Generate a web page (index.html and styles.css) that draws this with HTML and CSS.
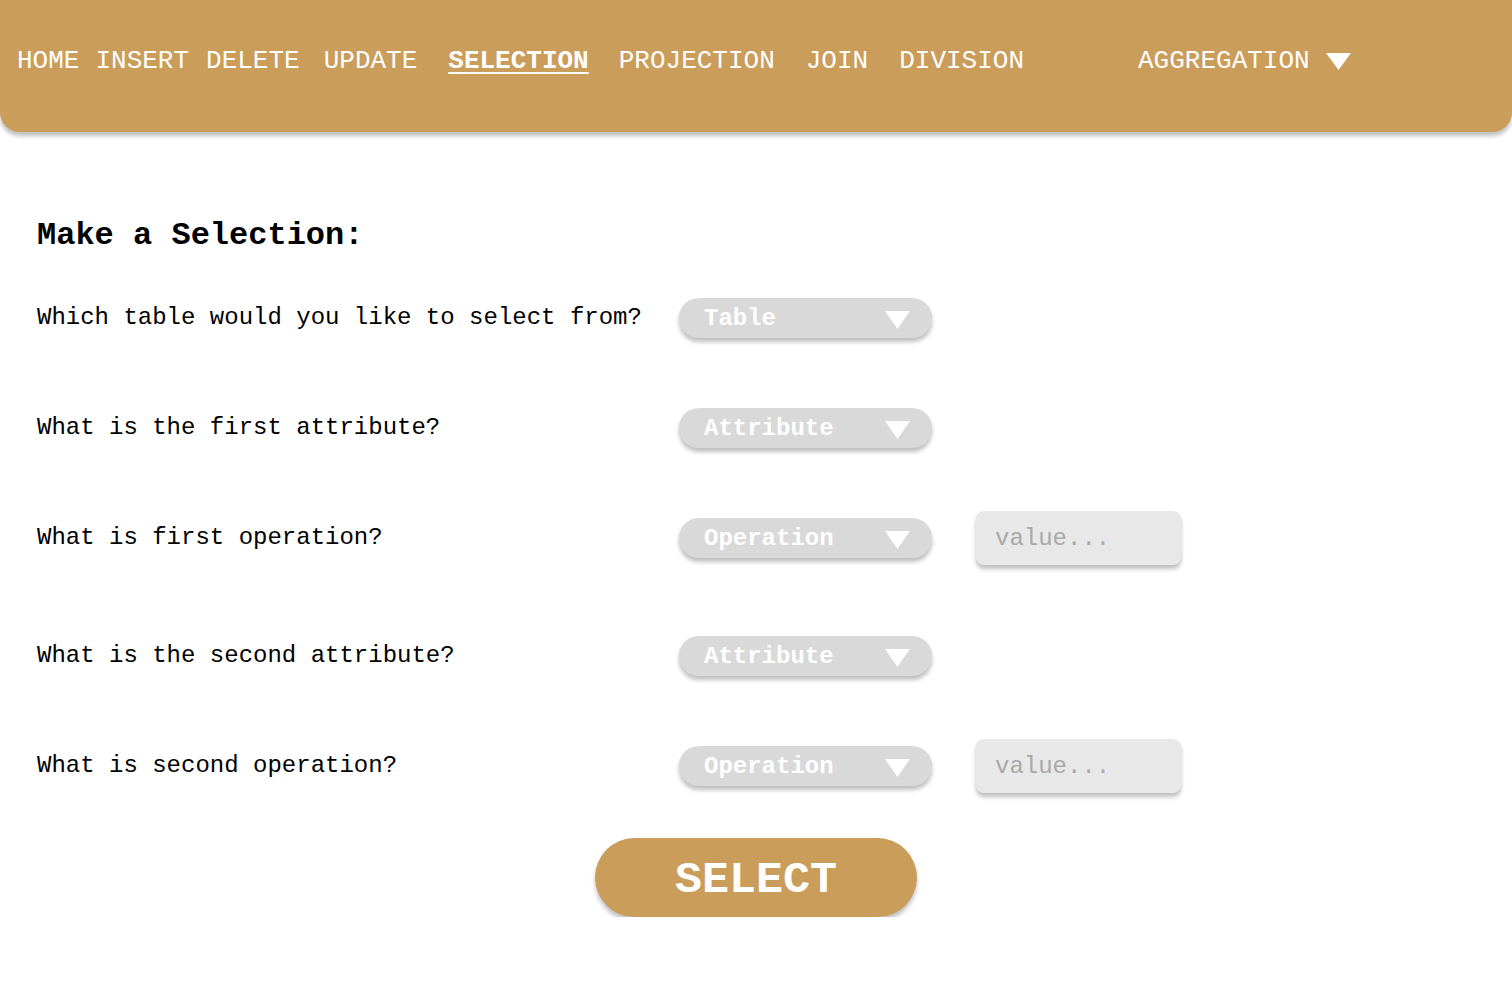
FILE: index.html
```html
<!DOCTYPE html>
<html lang="en">
<head>
<meta charset="utf-8">
<title>Selection</title>
<link rel="stylesheet" href="styles.css">
</head>
<body>
<nav class="topnav">
  <a class="nav-link nl-home" href="#">HOME</a>
  <a class="nav-link nl-insert" href="#">INSERT</a>
  <a class="nav-link nl-delete" href="#">DELETE</a>
  <a class="nav-link nl-update" href="#">UPDATE</a>
  <a class="nav-link nl-std active" href="#">SELECTION</a>
  <a class="nav-link nl-proj" href="#">PROJECTION</a>
  <a class="nav-link nl-std" href="#">JOIN</a>
  <a class="nav-link nl-std" href="#">DIVISION</a>
  <a class="nav-link nl-agg" href="#">AGGREGATION
    <svg class="nav-caret" width="25" height="17" viewBox="0 0 25 17"><polygon points="0,0 25,0 12.5,17" fill="#fff"/></svg>
  </a>
</nav>
<main class="content">
  <h1 class="title">Make a Selection:</h1>
  <div class="row">
    <span class="label">Which table would you like to select from?</span>
    <div class="dropdown"><span>Table</span><svg class="caret" width="25" height="18" viewBox="0 0 25 18"><polygon points="0,0 25,0 12.5,18" fill="#fff"/></svg></div>
  </div>
  <div class="row">
    <span class="label">What is the first attribute?</span>
    <div class="dropdown"><span>Attribute</span><svg class="caret" width="25" height="18" viewBox="0 0 25 18"><polygon points="0,0 25,0 12.5,18" fill="#fff"/></svg></div>
  </div>
  <div class="row">
    <span class="label">What is first operation?</span>
    <div class="dropdown"><span>Operation</span><svg class="caret" width="25" height="18" viewBox="0 0 25 18"><polygon points="0,0 25,0 12.5,18" fill="#fff"/></svg></div>
    <input class="value" type="text" placeholder="value...">
  </div>
  <div class="row row-wide">
    <span class="label">What is the second attribute?</span>
    <div class="dropdown"><span>Attribute</span><svg class="caret" width="25" height="18" viewBox="0 0 25 18"><polygon points="0,0 25,0 12.5,18" fill="#fff"/></svg></div>
  </div>
  <div class="row">
    <span class="label">What is second operation?</span>
    <div class="dropdown"><span>Operation</span><svg class="caret" width="25" height="18" viewBox="0 0 25 18"><polygon points="0,0 25,0 12.5,18" fill="#fff"/></svg></div>
    <input class="value" type="text" placeholder="value...">
  </div>
  <div class="actions">
    <button class="select-btn" type="button">SELECT</button>
  </div>
</main>
</body>
</html>
```

FILE: styles.css
```css
* { box-sizing: border-box; }
html, body { margin: 0; padding: 0; background: #fff; }
body {
  font-family: "Liberation Mono", "Courier New", monospace;
  color: #000;
}
.topnav {
  height: 132px;
  background: #CB9D5A;
  border-radius: 0 0 20px 20px;
  box-shadow: 0 4px 4px rgba(0, 0, 0, 0.25);
  display: flex;
  align-items: flex-start;
  padding: 46px 0 0 17px;
}
.nav-link {
  color: #fff;
  text-decoration: none;
  font-size: 26px;
  line-height: 30px;
  white-space: nowrap;
  display: flex;
  align-items: center;
}
.nl-insert { margin-left: 16px; }
.nl-delete { margin-left: 17px; }
.nl-update { margin-left: 24px; }
.nl-std { margin-left: 31px; }
.nl-proj { margin-left: 30px; }
.nl-agg { margin-left: 114px; }
.nav-link.active {
  font-weight: bold;
  text-decoration: underline;
  text-underline-offset: 4px;
  text-decoration-thickness: 2px;
}
.nav-caret { margin-left: 16px; }

.content { padding: 0 37px; }
.title {
  margin: 85px 0 0;
  font-size: 32px;
  line-height: 37px;
  font-weight: bold;
}
.row {
  display: flex;
  align-items: center;
  height: 40px;
  margin-top: 70px;
}
.title + .row { margin-top: 44px; }
.row-wide { margin-top: 78px; }
.label {
  width: 642px;
  font-size: 24px;
  line-height: 28px;
  white-space: nowrap;
}
.dropdown {
  width: 253px;
  height: 40px;
  border-radius: 20px;
  background: #D9D9D9;
  box-shadow: 0 4px 4px rgba(0, 0, 0, 0.25);
  display: flex;
  align-items: center;
  justify-content: space-between;
  padding: 0 22px 0 25px;
  color: #fff;
  font-weight: bold;
  font-size: 24px;
}
.caret { margin-top: 4px; }
.value {
  margin-left: 44px;
  width: 205px;
  height: 54px;
  border: none;
  border-radius: 8px;
  background: #E8E8E8;
  box-shadow: 0 4px 4px rgba(0, 0, 0, 0.25);
  padding: 0 19px;
  font-family: "Liberation Mono", "Courier New", monospace;
  font-size: 24px;
  color: #555;
  outline: none;
}
.value::placeholder { color: #A8A8A8; }
.actions {
  display: flex;
  justify-content: center;
  margin-top: 52px;
  margin-left: -37px;
  margin-right: -37px;
}
.select-btn {
  width: 322px;
  height: 79px;
  border: none;
  border-radius: 40px;
  background: #CB9D5A;
  box-shadow: 0 4px 4px rgba(0, 0, 0, 0.25);
  color: #fff;
  font-family: "Liberation Mono", "Courier New", monospace;
  font-weight: bold;
  font-size: 45px;
  padding: 6px 0 0;
  cursor: pointer;
}
```
